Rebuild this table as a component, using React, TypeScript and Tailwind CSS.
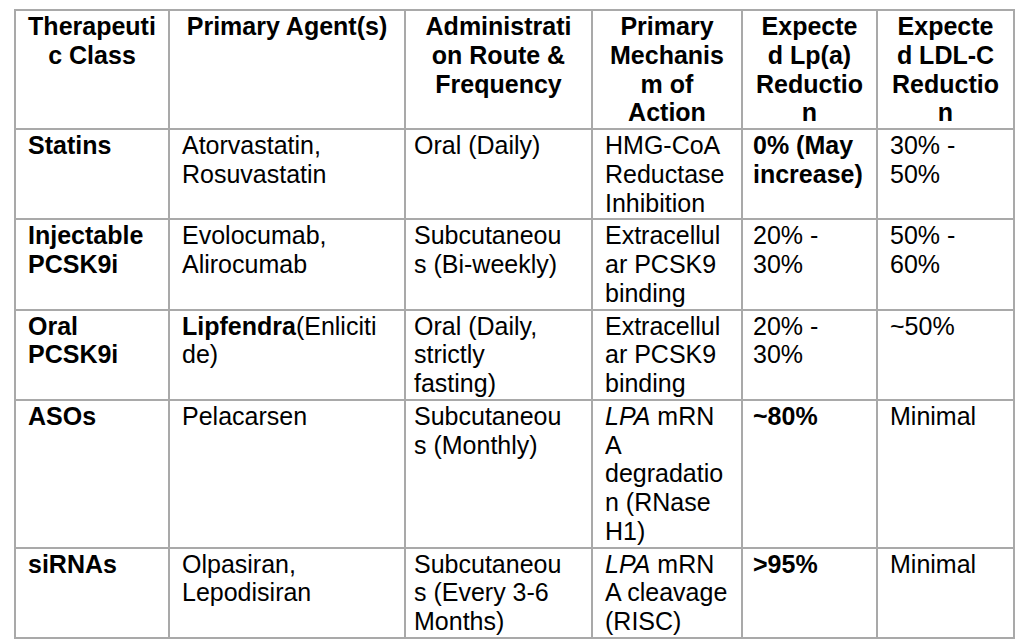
import type { ReactNode } from "react";

type Row = ReactNode[][];

const header: string[][] = [
    ["Therapeuti", "c Class"],
    ["Primary Agent(s)"],
    ["Administrati", "on Route &", "Frequency"],
    ["Primary", "Mechanis", "m of", "Action"],
    ["Expecte", "d Lp(a)", "Reductio", "n"],
    ["Expecte", "d LDL-C", "Reductio", "n"],
];

const b = (t: string) => <span className="font-bold">{t}</span>;
const lpa = <><span className="italic">LPA</span> mRN</>;

const rows: Row[] = [
    [
        [b("Statins")],
        ["Atorvastatin,", "Rosuvastatin"],
        ["Oral (Daily)"],
        ["HMG-CoA", "Reductase", "Inhibition"],
        [b("0% (May"), b("increase)")],
        ["30% -", "50%"],
    ],
    [
        [b("Injectable"), b("PCSK9i")],
        ["Evolocumab,", "Alirocumab"],
        ["Subcutaneou", "s (Bi-weekly)"],
        ["Extracellul", "ar PCSK9", "binding"],
        ["20% -", "30%"],
        ["50% -", "60%"],
    ],
    [
        [b("Oral"), b("PCSK9i")],
        [<>{b("Lipfendra")}(Enliciti</>, "de)"],
        ["Oral (Daily,", "strictly", "fasting)"],
        ["Extracellul", "ar PCSK9", "binding"],
        ["20% -", "30%"],
        ["~50%"],
    ],
    [
        [b("ASOs")],
        ["Pelacarsen"],
        ["Subcutaneou", "s (Monthly)"],
        [lpa, "A", "degradatio", "n (RNase", "H1)"],
        [b("~80%")],
        ["Minimal"],
    ],
    [
        [b("siRNAs")],
        ["Olpasiran,", "Lepodisiran"],
        ["Subcutaneou", "s (Every 3-6", "Months)"],
        [lpa, "A cleavage", "(RISC)"],
        [b(">95%")],
        ["Minimal"],
    ],
];

const cell = "border-2 border-[#a9a9a9] py-px align-top whitespace-nowrap";
// left padding per column, body rows only
const padBody = ["px-3", "px-3", "pl-2 pr-3", "px-3", "pl-2.5 pr-3", "px-3"];

export default function App() {
    return (
        <div
            className="min-h-screen bg-white pl-[14px] pt-[9px] text-black"
            style={{ fontFamily: '"Liberation Sans", Arial, sans-serif' }}
        >
            <table className="w-[999px] table-fixed border-collapse text-[25px] leading-[28.75px]">
                <colgroup>
                    <col className="w-[154px]" />
                    <col className="w-[236px]" />
                    <col className="w-[187px]" />
                    <col className="w-[150px]" />
                    <col className="w-[135px]" />
                    <col className="w-[137px]" />
                </colgroup>
                <thead>
                    <tr>
                        {header.map((lines, i) => (
                            <th key={i} className={`${cell} px-2 text-center font-bold`}>
                                {lines.map((l, j) => (
                                    <div key={j}>{l}</div>
                                ))}
                            </th>
                        ))}
                    </tr>
                </thead>
                <tbody>
                    {rows.map((row, r) => (
                        <tr key={r}>
                            {row.map((lines, c) => (
                                <td key={c} className={`${cell} ${padBody[c]} text-left font-normal`}>
                                    {lines.map((l, j) => (
                                        <div key={j}>{l}</div>
                                    ))}
                                </td>
                            ))}
                        </tr>
                    ))}
                </tbody>
            </table>
        </div>
    );
}
